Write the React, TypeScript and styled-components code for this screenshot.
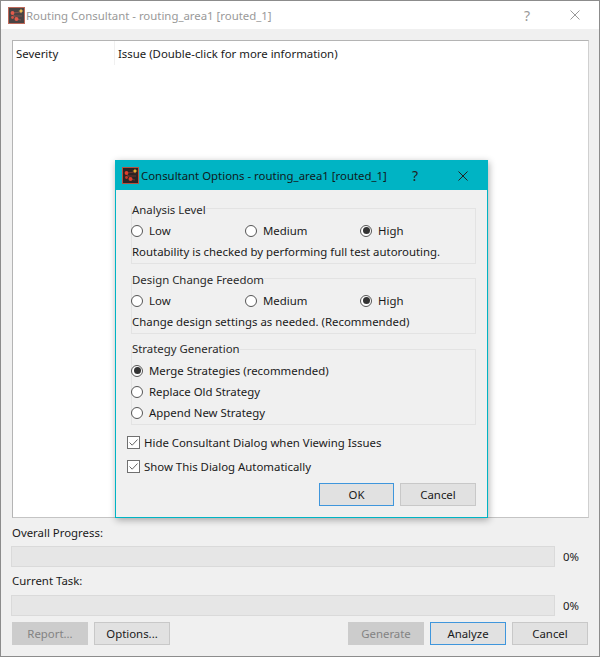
import React from "react";
import styled, { createGlobalStyle } from "styled-components";

const Global = createGlobalStyle`
  html, body { margin: 0; padding: 0; background: #f0f0f0; }
  * { box-sizing: border-box; }
  body { font-family: "Noto Sans", "Open Sans", sans-serif; font-size: 11.4px; color: #1a1a1a; }
`;

const Window = styled.div`
  position: relative;
  width: 600px;
  height: 657px;
  border: 1px solid #8c8c8c;
  background: #f0f0f0;
  display: flex;
  flex-direction: column;
  overflow: hidden;
`;

const MainTitleBar = styled.div`
  height: 28px;
  background: #fff;
  display: flex;
  align-items: center;
  padding-left: 7px;
  flex: none;
`;

const TitleIcon = styled.span<{ $faded?: boolean }>`
  display: flex;
  flex: none;
  opacity: ${(p) => (p.$faded ? 0.85 : 1)};
`;

const MainTitle = styled.span`
  margin-left: 1px;
  color: #999;
  white-space: nowrap;
  flex: 1;
`;

const WindowControl = styled.span<{ $dark?: boolean }>`
  width: 48px;
  height: 28px;
  flex: none;
  display: flex;
  align-items: center;
  justify-content: center;
  color: ${(p) => (p.$dark ? "#222" : "#999")};
  font-size: 14px;
`;

const Content = styled.div`
  flex: 1;
  display: flex;
  flex-direction: column;
  padding: 11px 10px 10px 10px;
`;

const IssueList = styled.div`
  height: 478px;
  margin-left: 1px;
  background: #fff;
  border: 1px solid #b4b4b4;
  border-right-color: #d0d0d0;
  border-bottom-color: #c4c4c4;
  flex: none;
`;

const ListHeader = styled.div`
  display: flex;
  height: 25px;
  align-items: flex-start;
`;

const HeaderCell = styled.span<{ $w?: number }>`
  width: ${(p) => (p.$w ? `${p.$w}px` : "auto")};
  flex: ${(p) => (p.$w ? "none" : "1")};
  padding-left: 3px;
  height: 24px;
  line-height: 25px;
  border-right: ${(p) => (p.$w ? "1px solid #f0f0f0" : "none")};
  white-space: nowrap;
`;

const ProgressLabel = styled.div<{ $mt: number }>`
  height: 16px;
  line-height: 16px;
  margin-top: ${(p) => p.$mt}px;
  padding-left: 1px;
`;

const ProgressRow = styled.div<{ $mt: number }>`
  display: flex;
  align-items: center;
  height: 21px;
  margin-top: ${(p) => p.$mt}px;
`;

const ProgressTrack = styled.div`
  width: 544px;
  height: 21px;
  background: #e6e6e6;
  border: 1px solid #dadada;
  flex: none;
`;

const Percent = styled.span`
  margin-left: 8px;
  white-space: nowrap;
`;

const ButtonBar = styled.div`
  display: flex;
  margin-top: 6px;
  padding-left: 1px;
  gap: 6px;
`;

const Spacer = styled.div`
  width: 166px;
  flex: none;
`;

const Btn = styled.div<{ $disabled?: boolean; $focus?: boolean; $w?: number }>`
  width: ${(p) => p.$w ?? 76}px;
  height: 23px;
  flex: none;
  display: flex;
  align-items: center;
  justify-content: center;
  background: ${(p) => (p.$disabled ? "#cccccc" : "#e1e1e1")};
  color: ${(p) => (p.$disabled ? "#838383" : "#1a1a1a")};
  border: 1px solid ${(p) => (p.$disabled ? "#cccccc" : p.$focus ? "#3f96dc" : "#c8c8c8")};
`;

const Dialog = styled.div`
  position: absolute;
  left: 114px;
  top: 159px;
  width: 373px;
  height: 358px;
  background: #f0f0f0;
  border: 1px solid #00b4c4;
  box-shadow: 1px 2px 7px rgba(0, 0, 0, 0.32);
  display: flex;
  flex-direction: column;
`;

const DialogTitleBar = styled.div`
  height: 29px;
  flex: none;
  background: #00b4c4;
  display: flex;
  align-items: center;
  padding-left: 6px;
`;

const DialogTitle = styled.span`
  margin-left: 2px;
  color: #101a1c;
  white-space: nowrap;
  flex: 1;
`;

const DialogBody = styled.div`
  flex: 1;
  display: flex;
  flex-direction: column;
  padding: 8px 11px 10px 11px;
`;

const Group = styled.fieldset<{ $h: number; $mb: number }>`
  margin: 0 0 ${(p) => p.$mb}px 4px;
  padding: 0;
  height: ${(p) => p.$h}px;
  width: 345px;
  border: 1px solid #e3e3e3;
  min-width: 0;
  flex: none;
`;

const Legend = styled.legend<{ $drop: number }>`
  padding: ${(p) => p.$drop * 2}px 0 0 0;
  height: ${(p) => 16 + p.$drop * 2}px;
  line-height: 16px;
  color: #2a2a2a;
`;

const RadioRow = styled.div`
  display: grid;
  grid-template-columns: 114px 115px 1fr;
  height: 21px;
  align-items: center;
  margin: 2px 0 1px -1px;
`;

const RadioStack = styled.div`
  display: flex;
  flex-direction: column;
  margin: 3px 0 0 -1px;
`;

const Radio = styled.label`
  display: flex;
  align-items: center;
  gap: 6px;
  height: 21px;
  white-space: nowrap;
`;

const RadioDot = styled.span<{ $on?: boolean }>`
  width: 12px;
  height: 12px;
  border-radius: 50%;
  background: #fff;
  border: 1px solid #555;
  flex: none;
  display: flex;
  align-items: center;
  justify-content: center;
  &::after {
    content: "";
    display: ${(p) => (p.$on ? "block" : "none")};
    width: 7px;
    height: 7px;
    border-radius: 50%;
    background: #333;
  }
`;

const Description = styled.div`
  height: 20px;
  line-height: 20px;
  white-space: nowrap;
`;

const Check = styled.label<{ $mt: number }>`
  display: flex;
  align-items: center;
  gap: 4px;
  height: 16px;
  margin-top: ${(p) => p.$mt}px;
  white-space: nowrap;
`;

const CheckBox = styled.span`
  width: 13px;
  height: 13px;
  flex: none;
  background: #fff;
  border: 1px solid #707070;
  display: flex;
  align-items: center;
  justify-content: center;
`;

const DialogButtons = styled.div`
  display: flex;
  justify-content: flex-end;
  gap: 6px;
  margin-top: 9px;
`;

const AppIcon = () => (
  <svg width="17" height="17" viewBox="0 0 17 17">
    <rect x="0.5" y="0.5" width="16" height="16" fill="#2a2424" stroke="#b5503e" />
    <path d="M4 6 L14 5 M5 9 L14 9 M8 12 L13 13 M4 6 L9 12" stroke="#7a3a32" strokeWidth="0.8" fill="none" />
    <circle cx="4.5" cy="6" r="1.9" fill="#dd3f2c" />
    <circle cx="4.5" cy="10.5" r="1.4" fill="#c93727" />
    <circle cx="8.5" cy="12" r="2" fill="#dd3f2c" />
    <path d="M13 1.5 L13.8 3.2 L15.5 4 L13.8 4.8 L13 6.5 L12.2 4.8 L10.5 4 L12.2 3.2 Z" fill="#f2b632" />
  </svg>
);

const CloseIcon = ({ color }: { color: string }) => (
  <svg width="10" height="10" viewBox="0 0 10 10">
    <path d="M0.5 0.5 L9.5 9.5 M9.5 0.5 L0.5 9.5" stroke={color} strokeWidth="1" fill="none" />
  </svg>
);

const Tick = () => (
  <svg width="11" height="11" viewBox="0 0 11 11">
    <path d="M1.5 5.5 L4.2 8.2 L9.5 2.5" stroke="#666" strokeWidth="1" fill="none" />
  </svg>
);

const RadioItem = ({ label, on }: { label: string; on?: boolean }) => (
  <Radio>
    <RadioDot $on={on} />
    {label}
  </Radio>
);

const CheckItem = ({ label, mt }: { label: string; mt: number }) => (
  <Check $mt={mt}>
    <CheckBox>
      <Tick />
    </CheckBox>
    {label}
  </Check>
);

export default function App() {
  return (
    <Window>
      <Global />
      <MainTitleBar>
        <TitleIcon $faded>
          <AppIcon />
        </TitleIcon>
        <MainTitle>Routing Consultant - routing_area1 [routed_1]</MainTitle>
        <WindowControl>?</WindowControl>
        <WindowControl>
          <CloseIcon color="#999" />
        </WindowControl>
      </MainTitleBar>
      <Content>
        <IssueList>
          <ListHeader>
            <HeaderCell $w={102}>Severity</HeaderCell>
            <HeaderCell>Issue (Double-click for more information)</HeaderCell>
          </ListHeader>
        </IssueList>
        <ProgressLabel $mt={7}>Overall Progress:</ProgressLabel>
        <ProgressRow $mt={5}>
          <ProgressTrack />
          <Percent>0%</Percent>
        </ProgressRow>
        <ProgressLabel $mt={6}>Current Task:</ProgressLabel>
        <ProgressRow $mt={6}>
          <ProgressTrack />
          <Percent>0%</Percent>
        </ProgressRow>
        <ButtonBar>
          <Btn $disabled>Report...</Btn>
          <Btn>Options...</Btn>
          <Spacer />
          <Btn $disabled>Generate</Btn>
          <Btn $focus>Analyze</Btn>
          <Btn>Cancel</Btn>
        </ButtonBar>
      </Content>
      <Dialog>
        <DialogTitleBar>
          <TitleIcon>
            <AppIcon />
          </TitleIcon>
          <DialogTitle>Consultant Options - routing_area1 [routed_1]</DialogTitle>
          <WindowControl $dark>?</WindowControl>
          <WindowControl $dark>
            <CloseIcon color="#222" />
          </WindowControl>
        </DialogTitleBar>
        <DialogBody>
          <Group $h={66} $mb={4}>
            <Legend $drop={2}>Analysis Level</Legend>
            <RadioRow>
              <RadioItem label="Low" />
              <RadioItem label="Medium" />
              <RadioItem label="High" on />
            </RadioRow>
            <Description>Routability is checked by performing full test autorouting.</Description>
          </Group>
          <Group $h={66} $mb={7}>
            <Legend $drop={2}>Design Change Freedom</Legend>
            <RadioRow>
              <RadioItem label="Low" />
              <RadioItem label="Medium" />
              <RadioItem label="High" on />
            </RadioRow>
            <Description>Change design settings as needed. (Recommended)</Description>
          </Group>
          <Group $h={84} $mb={0}>
            <Legend $drop={0}>Strategy Generation</Legend>
            <RadioStack>
              <RadioItem label="Merge Strategies (recommended)" on />
              <RadioItem label="Replace Old Strategy" />
              <RadioItem label="Append New Strategy" />
            </RadioStack>
          </Group>
          <CheckItem label="Hide Consultant Dialog when Viewing Issues" mt={9} />
          <CheckItem label="Show This Dialog Automatically" mt={8} />
          <DialogButtons>
            <Btn $focus $w={75}>OK</Btn>
            <Btn>Cancel</Btn>
          </DialogButtons>
        </DialogBody>
      </Dialog>
    </Window>
  );
}
